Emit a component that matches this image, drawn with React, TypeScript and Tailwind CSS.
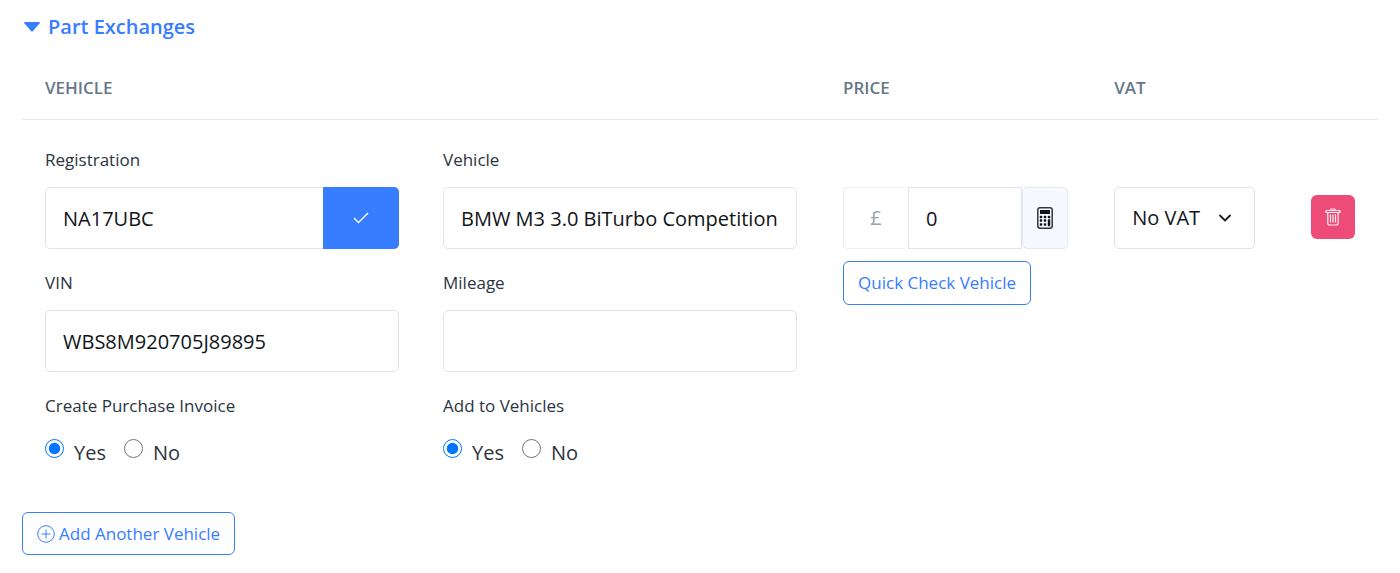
import type { ReactNode } from "react";

const INPUT = "h-[62px] w-full min-w-0 border border-[#dfe3ee] bg-white px-[17px] text-[20px] text-[#101419] outline-none";

function Field({ id, label, children }: { id: string; label: string; children: ReactNode }) {
  return (
    <div>
      <label htmlFor={id} className="mb-[15px] block text-[17px] leading-6">{label}</label>
      {children}
    </div>
  );
}

function YesNo({ name, legend }: { name: string; legend: string }) {
  return (
    <fieldset>
      <legend className="mb-[15px] block text-[17px] leading-6">{legend}</legend>
      <div className="flex gap-[18px] pt-1 text-[20px] leading-8">
        <label className="flex gap-[10px]">
          <input type="radio" name={name} defaultChecked className="mt-[2px] size-[19px] accent-[#0075ff]" />
          Yes
        </label>
        <label className="flex gap-[10px]">
          <input type="radio" name={name} className="mt-[2px] size-[19px]" />
          No
        </label>
      </div>
    </fieldset>
  );
}

function CalculatorIcon() {
  return (
    <svg viewBox="0 0 16 22" className="h-[22px] w-4" fill="none">
      <rect x="0.8" y="0.8" width="14.4" height="20.4" rx="2.2" stroke="#30363f" strokeWidth="1.5" />
      <path d="M3 3h10v4H3z" fill="#11151a" />
      <path d="M3 9h2v2H3zM7 9h2v2H7zM11 9h2v2h-2zM3 12.5h2v2H3zM7 12.5h2v2H7zM11 12.5h2V19h-2zM3 16.5h2v2H3zM7 16.5h2v2H7z" fill="#11151a" stroke="#11151a" strokeWidth="0.4" />
    </svg>
  );
}

function TrashIcon() {
  return (
    <svg viewBox="0 0 16 18" className="h-[18px] w-4" fill="none" stroke="#fff" strokeOpacity="0.9" strokeWidth="1.2" strokeLinejoin="round">
      <path d="M1 2.5h14v2H1zM6 2.5V1h4v1.5M2.8 4.5v10.5q0 2 2 2h6.4q2 0 2-2V4.5M5.5 6.5v8M8 6.5v8M10.5 6.5v8" />
    </svg>
  );
}

export default function App() {
  return (
    <main className="bg-white px-[22px] pt-3 pb-[18px] font-['Open_Sans',sans-serif] text-[#2b3440]">
      <h2>
        <button type="button" className="flex items-center gap-2 pl-[2px] text-[20px] leading-[30px] font-semibold text-[#377dff]">
          <svg viewBox="0 0 16 10" className="h-[10px] w-4" fill="currentColor">
            <path d="M1 0h14q1.5.3.5 1.500L9 9Q8 10 7 9L.5 1.500Q-.5.3 1 0z" />
          </svg>
          Part Exchanges
        </button>
      </h2>

      <table className="mt-[14px] w-full table-fixed border-collapse text-left">
        <thead>
          <tr className="border-b border-[#e5e9f2] text-[17px] leading-6 text-[#677788]">
            <th className="w-[59%] px-[23px] pt-5 pb-[19px] font-semibold">VEHICLE</th>
            <th className="w-[20%] px-[21px] pt-5 pb-[19px] font-semibold">PRICE</th>
            <th className="w-[14%] px-[21px] pt-5 pb-[19px] font-semibold">VAT</th>
            <td className="w-[7%]" />
          </tr>
        </thead>
        <tbody>
          <tr className="align-top">
            <td className="pt-7 pr-[25px] pl-[23px]">
              <div className="grid grid-cols-2 gap-x-11 gap-y-[22px]">
                <Field id="registration" label="Registration">
                  <div className="flex">
                    <input id="registration" defaultValue="NA17UBC" className={`${INPUT} rounded-l-[5px] border-r-0`} />
                    <button type="button" aria-label="Look up registration" className="flex w-[76px] shrink-0 items-center justify-center rounded-r-[5px] bg-[#377dff]">
                      <svg viewBox="0 0 16 12" className="h-3 w-4" fill="none" stroke="#fff" strokeWidth="1.4">
                        <path d="M1 6l4.5 4.5L15 1" />
                      </svg>
                    </button>
                  </div>
                </Field>
                <Field id="vehicle" label="Vehicle">
                  <input id="vehicle" defaultValue="BMW M3 3.0 BiTurbo Competition" className={`${INPUT} rounded-[5px]`} />
                </Field>
                <Field id="vin" label="VIN">
                  <input id="vin" defaultValue="WBS8M920705J89895" className={`${INPUT} rounded-[5px]`} />
                </Field>
                <Field id="mileage" label="Mileage">
                  <input id="mileage" className={`${INPUT} rounded-[5px]`} />
                </Field>
                <YesNo name="invoice" legend="Create Purchase Invoice" />
                <YesNo name="addToVehicles" legend="Add to Vehicles" />
              </div>
            </td>
            <td className="px-[21px] pt-[67px]">
              <div className="flex pr-1">
                <span className="flex w-[65px] shrink-0 items-center justify-center rounded-[5px] border border-r-0 border-[#e9edf5] text-[20px] text-[#9aa5b1]">£</span>
                <input aria-label="Price" defaultValue="0" className={INPUT} />
                <button type="button" aria-label="Calculator" className="flex w-[46px] shrink-0 items-center justify-center rounded-[5px] border border-[#e5e9f2] bg-[#f6f9ff]">
                  <CalculatorIcon />
                </button>
              </div>
              <button type="button" className="mt-3 h-11 rounded-md border border-[#377dff] px-[14px] text-[17px] whitespace-nowrap text-[#377dff]">
                Quick Check Vehicle
              </button>
            </td>
            <td className="px-[21px] pt-[67px]">
              <div className="relative w-[141px]">
                <select aria-label="VAT" className={`${INPUT} appearance-none rounded-[5px]`}>
                  <option>No VAT</option>
                  <option>VAT Qualifying</option>
                </select>
                <svg viewBox="0 0 12 8" className="pointer-events-none absolute top-[27px] right-6 h-2 w-3" fill="none" stroke="#1e2022" strokeWidth="1.8" strokeLinecap="round" strokeLinejoin="round">
                  <path d="M1 1.5l5 5 5-5" />
                </svg>
              </div>
            </td>
            <td className="pt-[75px] pr-[23px]">
              <button type="button" aria-label="Remove vehicle" className="ml-auto flex size-11 items-center justify-center rounded-md bg-[#ed4c78]">
                <TrashIcon />
              </button>
            </td>
          </tr>
        </tbody>
      </table>

      <button type="button" className="mt-[43px] flex h-[43px] items-center gap-1 rounded-md border border-[#377dff] px-[14px] text-[17px] text-[#377dff]">
        <svg viewBox="0 0 18 18" className="size-[18px]" fill="none" stroke="currentColor">
          <circle cx="9" cy="9" r="8.3" />
          <path d="M9 4.5v9M4.5 9h9" />
        </svg>
        Add Another Vehicle
      </button>
    </main>
  );
}
